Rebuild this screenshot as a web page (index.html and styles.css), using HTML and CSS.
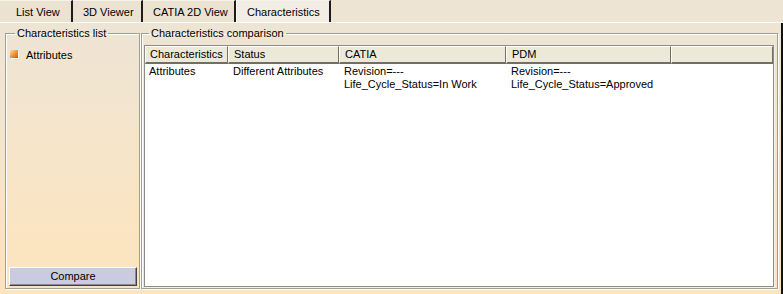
FILE: index.html
```html
<!DOCTYPE html>
<html>
<head>
<meta charset="utf-8">
<link rel="stylesheet" href="styles.css">
</head>
<body>
<div class="tabs">
  <div class="tab t1">List View</div>
  <div class="tab t2">3D Viewer</div>
  <div class="tab t3">CATIA 2D View</div>
  <div class="tab t4 active">Characteristics</div>
</div>
<div class="main">
  <fieldset class="group left">
    <legend>Characteristics list</legend>
    <div class="item">
      <svg class="icon" width="9" height="9" viewBox="0 0 9 9">
        <defs>
          <linearGradient id="g" x1="0" y1="0" x2="1" y2="1">
            <stop offset="0" stop-color="#ffdca8"/>
            <stop offset="0.5" stop-color="#f29636"/>
            <stop offset="1" stop-color="#c85a08"/>
          </linearGradient>
        </defs>
        <rect x="0" y="0" width="8" height="8" fill="url(#g)"/>
        <rect x="8" y="1" width="1" height="8" fill="#fff"/>
        <rect x="1" y="8" width="8" height="1" fill="#fff"/>
      </svg>
      <span>Attributes</span>
    </div>
    <div class="button">Compare</div>
  </fieldset>
  <fieldset class="group right">
    <legend>Characteristics comparison</legend>
    <div class="table">
      <div class="hd">Characteristics</div>
      <div class="hd">Status</div>
      <div class="hd">CATIA</div>
      <div class="hd">PDM</div>
      <div class="hd"></div>
      <div class="cell">Attributes</div>
      <div class="cell">Different Attributes</div>
      <div class="cell">Revision=---<br>Life_Cycle_Status=In Work</div>
      <div class="cell">Revision=---<br>Life_Cycle_Status=Approved</div>
      <div class="cell"></div>
    </div>
  </fieldset>
</div>
</body>
</html>
```

FILE: styles.css
```css
html, body {
  margin: 0;
  padding: 0;
}
body {
  width: 783px;
  height: 294px;
  overflow: hidden;
  font-family: "Liberation Sans", Arial, sans-serif;
  font-size: 11px;
  color: #000;
  background: linear-gradient(180deg, #ede4d4 0%, #f2e5d0 40%, #fbe4c2 80%, #fde4bf 100%);
}
.tabs {
  display: flex;
  height: 22px;
  border-bottom: 1px solid #ffffff;
  box-sizing: content-box;
}
.tab {
  box-sizing: border-box;
  height: 22px;
  line-height: 22px;
  border-right: 2px solid #1c1c1c;
  border-top: 1px solid #f6f1ea;
  background: #ebe2d2;
  white-space: nowrap;
}
.t1 { width: 73px; padding-left: 16px; }
.t2 { width: 70px; padding-left: 10px; }
.t3 { width: 93px; padding-left: 10px; }
.t4 { width: 95px; padding-left: 11px; }
.tab.active {
  background: #f2ede5;
  border-left: 1px solid #fbf8f3;
  padding-left: 10px;
}
.main {
  display: flex;
  gap: 1px;
  height: 271px;
  box-sizing: border-box;
  padding: 4px 3px 5px 5px;
  border-right: 2px solid #111;
}
.group {
  margin: 0;
  padding: 0;
  min-width: 0;
  border: 1px solid #a39d92;
  box-shadow: inset 1px 1px 0 #ffffff, 1px 1px 0 #ffffff;
  display: flex;
  flex-direction: column;
  box-sizing: border-box;
}
.group legend {
  padding: 0 2px;
  line-height: 13px;
  color: #000;
}
.left legend { margin-left: 6px; }
.right legend { margin-left: 5px; }
.left {
  width: 135px;
  flex: none;
  padding: 0 2px 2px 3px;
  background: linear-gradient(180deg, rgba(255,240,215,0) 0%, rgba(250,228,192,0.5) 100%);
}
.right {
  flex: 1;
  padding: 5px 3px 1px 2px;
}
.item {
  display: flex;
  align-items: center;
  gap: 7px;
  height: 13px;
  margin-top: 8px;
  padding-left: 1px;
}
.icon {
  display: block;
  flex: none;
  margin-top: -1px;
}
.button {
  margin-top: auto;
  height: 19px;
  box-sizing: border-box;
  line-height: 17px;
  text-align: center;
  background: #cbcbdf;
  border-top: 1px solid #ffffff;
  border-left: 1px solid #ffffff;
  border-right: 1px solid #404040;
  border-bottom: 1px solid #404040;
  box-shadow: inset -1px -1px 0 #8a8a9a;
}
.table {
  flex: 1;
  display: grid;
  grid-template-columns: 83px 111px 167px 165px 1fr;
  grid-template-rows: 18px 1fr;
  background: #ffffff;
  border: 1px solid #8e8c86;
  box-shadow: 1px 1px 0 #f4f1ea;
  align-content: start;
}
.hd {
  box-sizing: border-box;
  height: 18px;
  line-height: 15px;
  padding-left: 5px;
  background: #ece9d8;
  border-top: 1px solid #fff;
  border-left: 1px solid #fff;
  border-right: 1px solid #716f64;
  border-bottom: 2px solid #716f64;
  white-space: nowrap;
  overflow: hidden;
}
.hd:first-child { padding-left: 4px; }
.cell {
  padding: 1px 0 0 5px;
  line-height: 13px;
  white-space: nowrap;
}
.cell:nth-child(6) { padding-left: 4px; }
```
